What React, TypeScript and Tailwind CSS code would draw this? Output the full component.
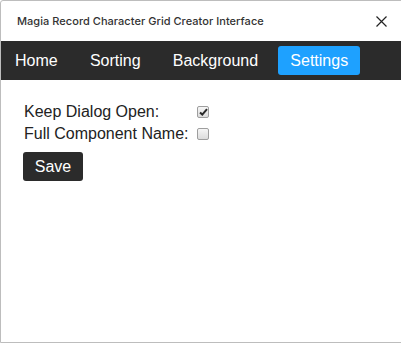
import React from 'react';

const tabs = ['Home', 'Sorting', 'Background', 'Settings'];

function Checkbox({ checked }: { checked?: boolean }) {
  return (
    <span className="ml-[8.5px] flex h-[12px] w-[12px] items-center justify-center rounded-[2px] border border-[#9e9e9e] bg-gradient-to-b from-[#f6f6f6] to-[#dcdcdc]">
      {checked && (
        <svg width="9" height="8" viewBox="0 0 9 8">
          <path d="M1 4.5 L3.3 6.6 L8 1.2" fill="none" stroke="#2a2a2a" strokeWidth="2" />
        </svg>
      )}
    </span>
  );
}

export default function App() {
  const active = 'Settings';

  return (
    <div className="h-[343px] w-[401px] overflow-hidden bg-white">
      <div className="flex h-[343px] w-[420px] flex-col rounded-tl-[3px] border border-[#bdbdbd] bg-white">
        {/* title bar */}
        <div className="flex h-[40px] w-[400px] items-center justify-between pl-[16px] pr-[14px]">
          <span className="font-['Inter',sans-serif] text-[11px] font-medium tracking-[0.04px] text-[#333]">
            Magia Record Character Grid Creator Interface
          </span>
          <svg width="11" height="11" viewBox="0 0 11 11">
            <path d="M0.5 0.5 L10.5 10.5 M10.5 0.5 L0.5 10.5" stroke="#222" strokeWidth="1.2" />
          </svg>
        </div>

        {/* tabs */}
        <div className="flex h-[39px] items-center gap-[8.2px] bg-[#2b2b2b] pl-[2px] font-['Liberation_Sans',Arial,sans-serif] text-[16px] text-white">
          {tabs.map((t) => (
            <div
              key={t}
              className={
                t === active
                  ? 'flex h-[29px] items-center rounded-[3px] bg-[#1ea1ff] px-[12px]'
                  : 'flex h-[29px] items-center px-[12px]'
              }
            >
              {t}
            </div>
          ))}
        </div>

        {/* settings */}
        <div className="pl-[22px] pt-[21px] font-['Liberation_Sans',Arial,sans-serif] text-[16px] text-[#222]">
          <div className="grid grid-cols-[auto_auto] justify-start pl-[1px] leading-[22px]">
            <span>Keep Dialog Open:</span>
            <span className="flex items-center">
              <Checkbox checked />
            </span>
            <span>Full Component Name:</span>
            <span className="flex items-center">
              <Checkbox />
            </span>
          </div>
          <button className="mt-[7px] flex h-[29px] w-[60px] items-center justify-center rounded-[3px] bg-[#2b2b2b] text-white">
            Save
          </button>
        </div>
      </div>
    </div>
  );
}
